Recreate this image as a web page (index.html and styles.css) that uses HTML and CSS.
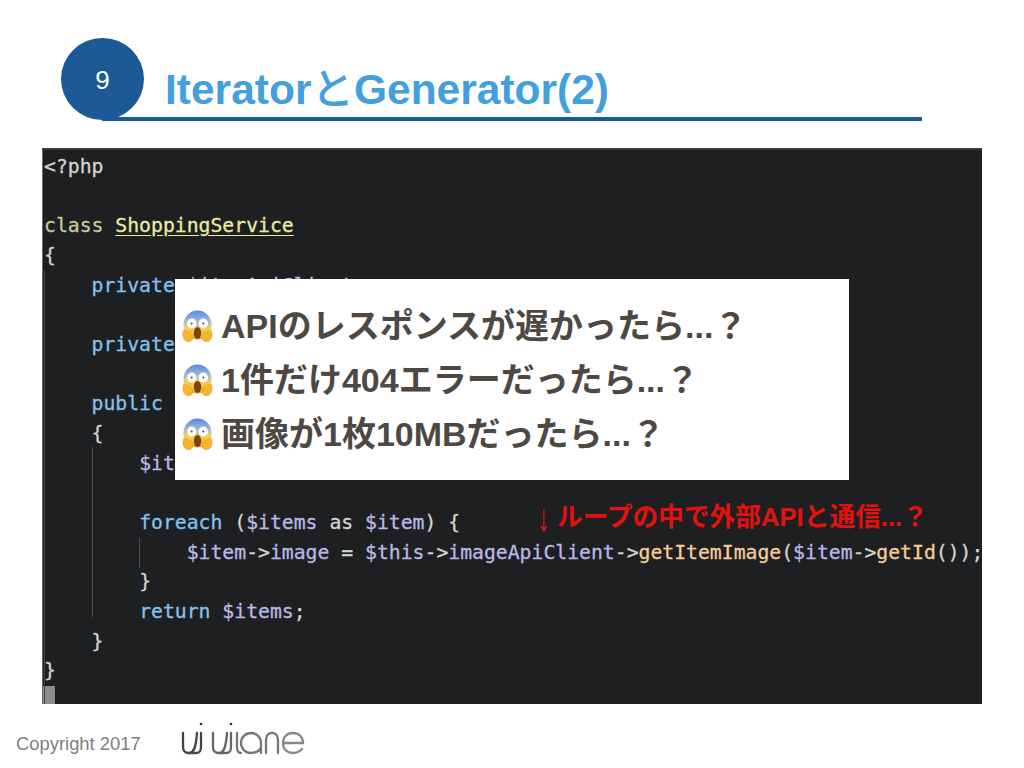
FILE: index.html
```html
<!DOCTYPE html>
<html lang="ja">
<head>
<meta charset="utf-8">
<title>IteratorとGenerator(2)</title>
<link rel="stylesheet" href="styles.css">
</head>
<body>
<svg class="defs" width="0" height="0" aria-hidden="true">
  <defs>
    <linearGradient id="face" x1="0" y1="0" x2="0" y2="1">
      <stop offset="0" stop-color="#5588e6"/>
      <stop offset="0.4" stop-color="#a9bcd8"/>
      <stop offset="0.6" stop-color="#f7cf55"/>
      <stop offset="1" stop-color="#f3a91e"/>
    </linearGradient>
    <symbol id="scream" viewBox="0 0 32 32" preserveAspectRatio="none">
      <circle cx="16" cy="15" r="14.5" fill="url(#face)"/>
      <ellipse cx="10" cy="13.500" rx="4.800" ry="5" fill="#fff"/>
      <ellipse cx="22" cy="13.500" rx="4.800" ry="5" fill="#fff"/>
      <circle cx="10" cy="13.500" r="1" fill="#444"/>
      <circle cx="22" cy="13.500" r="1" fill="#444"/>
      <ellipse cx="16" cy="23" rx="3.800" ry="6" fill="#7a4310"/>
      <path d="M2 20c-2 4-1 9 2 11 3 1.500 6 .5 7-2 .5-2-.5-4-2-5-2-1.500-4-3-7-4z" fill="#f5b52c" stroke="#e09a1a" stroke-width=".5"/>
      <path d="M30 20c2 4 1 9-2 11-3 1.500-6 .5-7-2-.5-2 .5-4 2-5 2-1.500 4-3 7-4z" fill="#f5b52c" stroke="#e09a1a" stroke-width=".5"/>
    </symbol>
  </defs>
</svg>
<main class="slide">
  <header class="head">
    <div class="badge">9</div>
    <h1 class="title">Iterator<span class="title-kana">と</span>Generator(2)</h1>
  </header>
  <section class="shot">
<pre class="code"><span class="txt">&lt;?php</span>

<span class="kw2">class</span> <span class="cls">ShoppingService</span>
<span class="txt">{</span>
    <span class="kw">private</span> <span class="var">$itemApiClient</span><span class="txt">;</span>

    <span class="kw">private</span>

    <span class="kw">public</span>
    <span class="txt">{</span>
        <span class="var">$it</span>

        <span class="kw">foreach</span> <span class="txt">(</span><span class="var">$items</span> <span class="txt">as</span> <span class="var">$item</span><span class="txt">) {</span>
            <span class="var">$item</span><span class="txt">-&gt;</span><span class="var">image</span> <span class="txt">=</span> <span class="var">$this</span><span class="txt">-&gt;</span><span class="var">imageApiClient</span><span class="txt">-&gt;</span><span class="fn">getItemImage</span><span class="txt">(</span><span class="var">$item</span><span class="txt">-&gt;</span><span class="fn">getId</span><span class="txt">());</span>
        <span class="txt">}</span>
        <span class="kw">return</span> <span class="var">$items</span><span class="txt">;</span>
    <span class="txt">}</span>
<span class="txt">}</span>
<span class="cursor"></span></pre>
    <i class="guide guide-edge"></i>
    <i class="guide guide-outer"></i>
    <i class="guide guide-inner"></i>
    <i class="guide guide-class"></i>
    <div class="popup">
      <p class="popup-line"><svg class="emoji"><use href="#scream"/></svg><span>APIのレスポンスが遅かったら...？</span></p>
      <p class="popup-line"><svg class="emoji"><use href="#scream"/></svg><span>1件だけ404エラーだったら...？</span></p>
      <p class="popup-line"><svg class="emoji"><use href="#scream"/></svg><span>画像が1枚10MBだったら...？</span></p>
    </div>
    <p class="note"><span class="arrow">↓</span> ループの中で外部APIと通信...？</p>
  </section>
  <footer class="foot">
    <span class="copy">Copyright 2017</span>
    <svg class="logo" width="128" height="36" viewBox="0 0 128 36" fill="none" stroke="#777" stroke-width="2.300" stroke-linecap="round" aria-label="vivlane">
      <circle cx="22" cy="4" r="1.300" fill="#333" stroke="none"/>
      <circle cx="52" cy="4" r="1.300" fill="#333" stroke="none"/>
      <path d="M4 13v14c0 4 2 6 6 6c5 0 7-6 8-20" stroke="#444"/>
      <path d="M22 13v14c0 4-1 6-5 6h-7" stroke="#444"/>
      <path d="M34 13v14c0 4 2 6 6 6c5 0 7-6 8-20" stroke="#666"/>
      <path d="M52 13v14c0 4-1 6-5 6h-7" stroke="#666"/>
      <path d="M58 13v14c0 4 1 6 4 6"/>
      <path d="M82 33V23a10 10 0 1 0-10 10c4 0 8-2 10-5"/>
      <path d="M87 33V20c0-5 3-7 6-7s6 2 6 7v13"/>
      <path d="M104 23h20c0-6-4-10-10-10s-10 4-10 10 4 10 10 10c4 0 7-2 9-4" stroke="#888"/>
    </svg>
  </footer>
</main>
</body>
</html>
```
FILE: styles.css
```css
* { box-sizing: border-box; }
html, body { margin: 0; padding: 0; background: #fff; }
.defs { position: absolute; }
.slide {
  width: 1024px;
  height: 768px;
  overflow: hidden;
  padding-top: 38px;
  font-family: "Liberation Sans", "Noto Sans CJK JP", sans-serif;
}
.head {
  display: flex;
  align-items: flex-start;
  width: 820px;
  height: 83px;
  margin-left: 102px;
  border-bottom: 4px solid #1b5a96;
}
.badge {
  flex: none;
  width: 83px;
  height: 82px;
  margin-left: -41px;
  border-radius: 50%;
  background: #1b5a96;
  color: #fff;
  font-size: 26px;
  line-height: 84px;
  text-align: center;
}
.title {
  margin: 27px 0 0 21px;
  color: #43a0dc;
  font-size: 42.5px;
  font-weight: 700;
  line-height: 50px;
  white-space: nowrap;
}
.title-kana { font-weight: 500; }
.shot {
  position: relative;
  width: 940px;
  height: 556px;
  margin: 27px 0 0 42px;
  background: #1d1f21;
  border-top: 2px solid #3c3d3f;
  overflow: hidden;
}
.code {
  margin: 0;
  padding: 2px 0 0 2px;
  color: #d0d0d0;
  font-family: "DejaVu Sans Mono", monospace;
  font-size: 19.75px;
  line-height: 29.65px;
  -webkit-text-stroke: 0.3px;
}
.txt { color: #d4d4d0; }
.kw { color: #86c0ee; }
.kw2 { color: #c8c896; }
.cls { color: #eaeaa4; text-decoration: underline; text-underline-offset: 3px; }
.var { color: #b8b8e4; }
.fn { color: #f6cb9c; }
.cursor {
  display: inline-block;
  width: 12px;
  height: 20px;
  margin-left: -1px;
  background: #8a8b8c;
  vertical-align: top;
}
.guide { position: absolute; width: 1px; background: #454648; }
.guide-edge { left: 0; top: 0; height: 100%; background: #6a6b6d; }
.guide-class { left: 2px; top: 120px; height: 505px; }
.guide-outer { left: 50px; top: 297px; height: 170px; background: #4a4b4d; }
.guide-inner { left: 97px; top: 388px; height: 30px; background: #4a4b4d; }
.popup {
  position: absolute;
  left: 133px;
  top: 129px;
  width: 674px;
  height: 201px;
  padding-top: 20px;
  background: #fff;
  color: #4e4843;
}
.popup-line {
  display: flex;
  align-items: center;
  height: 54px;
  margin: 0;
  padding-left: 7px;
  font-size: 34px;
  font-weight: 700;
  white-space: nowrap;
  line-height: 54px;
}
.emoji { flex: none; width: 31px; height: 32px; margin-right: 8px; }
.note {
  position: absolute;
  left: 495px;
  top: 350px;
  margin: 0;
  color: #e3120f;
  font-size: 25.7px;
  font-weight: 700;
  line-height: 34px;
  white-space: nowrap;
}
.arrow { display: inline-block; font-weight: 400; transform: scale(1, 1.5); }
.foot {
  display: flex;
  align-items: flex-start;
  gap: 38px;
  padding: 16px 0 0 16px;
}
.copy { margin-top: 12px; color: #808080; font-size: 18.400px; line-height: 24px; }
.logo { flex: none; }
```
